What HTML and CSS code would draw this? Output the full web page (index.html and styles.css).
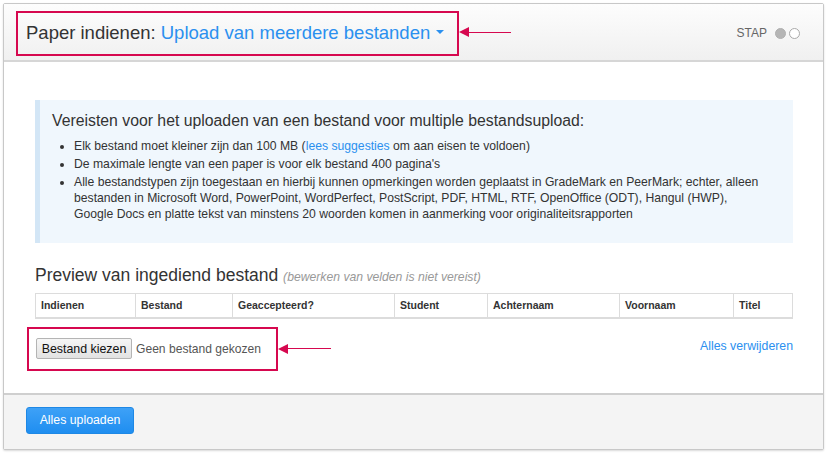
FILE: index.html
```html
<!DOCTYPE html>
<html lang="nl">
<head>
<meta charset="utf-8">
<title>Paper indienen</title>
<link rel="stylesheet" href="styles.css">
</head>
<body>
<div class="panel">
  <header class="panel-header">
    <div class="title-wrap">
      <div class="callout callout-title">
        <h1 class="title">Paper indienen: <span class="title-link">Upload van meerdere bestanden <span class="caret"></span></span></h1>
      </div>
      <div class="arrow arrow-title"><span class="arrow-head"></span><span class="arrow-line"></span></div>
    </div>
    <div class="steps">
      <span class="steps-label">STAP</span>
      <span class="dot dot-filled"></span>
      <span class="dot"></span>
    </div>
  </header>
  <main class="panel-body">
    <section class="info">
      <h2 class="info-title">Vereisten voor het uploaden van een bestand voor multiple bestandsupload:</h2>
      <ul class="info-list">
        <li>Elk bestand moet kleiner zijn dan 100 MB (<a class="link" href="#">lees suggesties</a> om aan eisen te voldoen)</li>
        <li>De maximale lengte van een paper is voor elk bestand 400 pagina's</li>
        <li>Alle bestandstypen zijn toegestaan en hierbij kunnen opmerkingen worden geplaatst in GradeMark en PeerMark; echter, alleen bestanden in Microsoft Word, PowerPoint, WordPerfect, PostScript, PDF, HTML, RTF, OpenOffice (ODT), Hangul (HWP), Google Docs en platte tekst van minstens 20 woorden komen in aanmerking voor originaliteitsrapporten</li>
      </ul>
    </section>
    <h3 class="preview-title">Preview van ingediend bestand <span class="preview-note">(bewerken van velden is niet vereist)</span></h3>
    <table class="preview-table">
      <thead>
        <tr>
          <th class="c1">Indienen</th>
          <th class="c2">Bestand</th>
          <th class="c3">Geaccepteerd?</th>
          <th class="c4">Student</th>
          <th class="c5">Achternaam</th>
          <th class="c6">Voornaam</th>
          <th class="c7">Titel</th>
        </tr>
      </thead>
    </table>
    <div class="file-row">
      <div class="file-wrap">
        <div class="callout callout-file">
          <button class="file-btn" type="button">Bestand kiezen</button>
          <span class="file-none">Geen bestand gekozen</span>
        </div>
        <div class="arrow arrow-file"><span class="arrow-head"></span><span class="arrow-line"></span></div>
      </div>
      <a class="link remove-all" href="#">Alles verwijderen</a>
    </div>
  </main>
  <footer class="panel-footer">
    <button class="btn-primary" type="button">Alles uploaden</button>
  </footer>
</div>
</body>
</html>
```

FILE: styles.css
```css
* { box-sizing: border-box; }
html, body { margin: 0; padding: 0; background: #fff; }
body {
  font-family: "Liberation Sans", Arial, sans-serif;
  color: #333;
  width: 829px;
  height: 454px;
  overflow: hidden;
}
.panel {
  margin: 3px 0 0 3px;
  width: 821px;
  height: 447px;
  border: 1px solid #c8c8c8;
  border-radius: 2px;
  box-shadow: 0 1px 2px rgba(0,0,0,0.15);
  display: flex;
  flex-direction: column;
  background: #fff;
}
.panel-header {
  height: 58px;
  flex: none;
  background: linear-gradient(#fdfdfd, #f0f0f0);
  border-bottom: 2px solid #d6d6d6;
  display: flex;
  align-items: center;
  justify-content: space-between;
  padding: 0 21px 0 12px;
}
.title-wrap { display: flex; align-items: center; }
.callout {
  border: 2px solid #d6084f;
}
.callout-title {
  width: 443px;
  height: 45px;
  display: flex;
  align-items: center;
  padding-left: 8px;
  margin-top: 2px;
}
.title {
  margin: 0;
  font-size: 18.5px;
  font-weight: normal;
  color: #333;
  white-space: nowrap;
}
.title-link { color: #2b90ef; }
.caret {
  display: inline-block;
  width: 0; height: 0;
  border-left: 4px solid transparent;
  border-right: 4px solid transparent;
  border-top: 4px solid #2b90ef;
  vertical-align: middle;
  margin-left: 1px;
  position: relative;
  top: -2px;
}
.arrow { display: flex; align-items: center; }
.arrow-head {
  width: 0; height: 0;
  border-top: 5px solid transparent;
  border-bottom: 5px solid transparent;
  border-right: 10px solid #d6084f;
}
.arrow-line {
  height: 1px;
  background: #d6084f;
}
.arrow-title .arrow-line { width: 42px; }
.steps { display: flex; align-items: center; gap: 3px; margin-top: 2px; margin-right: 2px; }
.steps-label { font-size: 12px; color: #666; margin-right: 5px; }
.dot {
  width: 11px; height: 11px;
  border-radius: 50%;
  border: 1px solid #aaa;
  background: #fff;
}
.dot-filled { background: #b5b5b5; border-color: #b0b0b0; }

.panel-body {
  flex: 1;
  padding: 38px 30px 0 31px;
}
.info {
  background: #f0f7fd;
  border-left: 5px solid #d3e6f6;
  height: 143px;
  padding: 12px 24px 0 12px;
}
.info-title {
  margin: 0 0 8px 0;
  font-size: 15.8px;
  font-weight: normal;
  color: #333;
}
.info-list {
  margin: 0;
  padding-left: 22px;
  font-size: 12.2px;
  line-height: 16px;
  color: #333;
}
.info-list li { margin-bottom: 2px; }
.link { color: #2b90ef; text-decoration: none; }
.preview-title {
  margin: 22px 0 7px 0;
  font-size: 17.5px;
  font-weight: normal;
  color: #333;
}
.preview-note {
  font-size: 12.2px;
  font-style: italic;
  color: #999;
}
.preview-table {
  width: 757px;
  border-collapse: collapse;
  table-layout: fixed;
}
.preview-table th {
  border: 1px solid #dcdcdc;
  border-bottom-width: 2px;
  height: 24px;
  padding: 0 5px;
  text-align: left;
  font-size: 10.5px;
  font-weight: bold;
  color: #333;
}
.c1 { width: 100px; }
.c2 { width: 97px; }
.c3 { width: 162px; }
.c4 { width: 93px; }
.c5 { width: 132px; }
.c6 { width: 114px; }
.c7 { width: 59px; }
.file-row {
  display: flex;
  justify-content: space-between;
  align-items: center;
  margin-top: 8px;
  margin-left: -8px;
}
.file-wrap { display: flex; align-items: center; }
.callout-file {
  width: 251px;
  height: 44px;
  display: flex;
  align-items: center;
  padding-left: 7px;
  gap: 4px;
}
.file-btn {
  font-family: "Liberation Sans", Arial, sans-serif;
  font-size: 12.4px;
  color: #111;
  height: 21px;
  width: 96px;
  padding: 0;
  border: 1px solid #b4b4b4;
  border-radius: 2px;
  background: linear-gradient(#f6f6f6, #e2e2e2);
}
.file-none { font-size: 12.1px; color: #555; }
.arrow-file .arrow-line { width: 43px; }
.remove-all { font-size: 12.3px; margin-top: -5px; }

.panel-footer {
  height: 56px;
  flex: none;
  background: #f4f4f4;
  border-top: 2px solid #cfcfcf;
  display: flex;
  align-items: center;
  padding-left: 22px;
}
.btn-primary {
  font-family: "Liberation Sans", Arial, sans-serif;
  font-size: 12.3px;
  color: #fff;
  width: 108px;
  height: 27px;
  border: 1px solid #1e88e5;
  border-radius: 3px;
  background: linear-gradient(#3ea1f7, #1f8ef0);
  margin-top: -4px;
}
```
